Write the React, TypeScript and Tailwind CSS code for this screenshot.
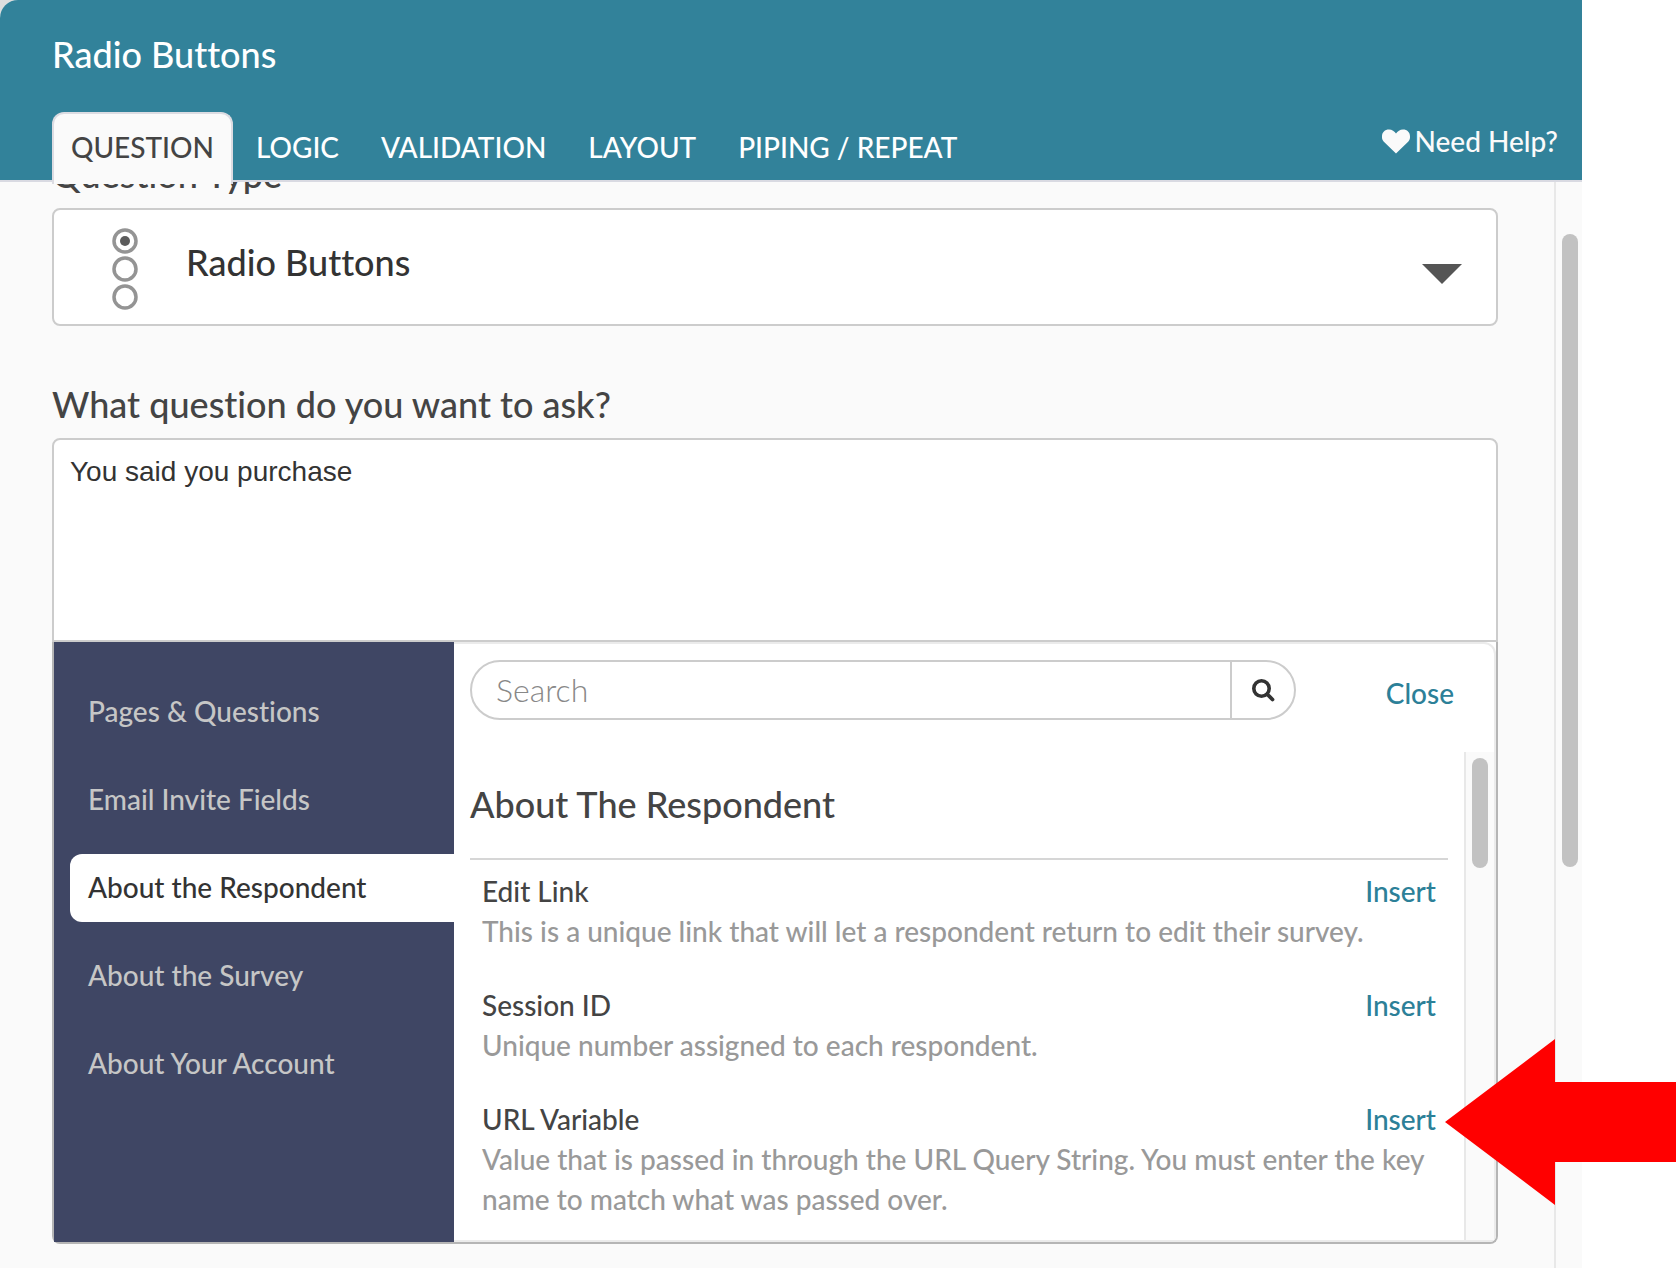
import { useState } from 'react'

interface MergeField {
  name: string
  description: string
}

const tabs = ['QUESTION', 'LOGIC', 'VALIDATION', 'LAYOUT', 'PIPING / REPEAT']

const categories = [
  'Pages & Questions',
  'Email Invite Fields',
  'About the Respondent',
  'About the Survey',
  'About Your Account',
]

const fields: MergeField[] = [
  {
    name: 'Edit Link',
    description: 'This is a unique link that will let a respondent return to edit their survey.',
  },
  {
    name: 'Session ID',
    description: 'Unique number assigned to each respondent.',
  },
  {
    name: 'URL Variable',
    description:
      'Value that is passed in through the URL Query String. You must enter the key name to match what was passed over.',
  },
]

function HeartIcon() {
  return (
    <svg width="30" height="26" viewBox="0 0 30 26" fill="#fafafa" aria-hidden="true">
      <path d="M15 25.5 2.600 13.400C.9 11.700 1 9.800 1 8.500 1 4.200 3.900 1.500 8 1.500c3 0 5.500 2 7 4 1.500-2 4-4 7-4 4.100 0 7 2.700 7 7 0 1.300.1 3.200-1.600 4.900Z" />
    </svg>
  )
}

function RadioListIcon() {
  return (
    <svg width="28" height="84" viewBox="0 0 28 84" fill="none" stroke="#949494" strokeWidth="3.5" aria-hidden="true">
      <circle cx="14" cy="14" r="11" />
      <circle cx="14" cy="42" r="11" />
      <circle cx="14" cy="70" r="11" />
      <circle cx="14" cy="14" r="5" fill="#5c5c5c" stroke="none" />
    </svg>
  )
}

function SearchIcon() {
  return (
    <svg width="24" height="24" viewBox="0 0 24 24" fill="none" stroke="#333" aria-hidden="true">
      <circle cx="10.500" cy="10.500" r="7.700" strokeWidth="3.600" />
      <path d="m16.500 16.500 5 5" strokeWidth="3.800" strokeLinecap="round" />
    </svg>
  )
}

function Header() {
  const [activeTab, setActiveTab] = useState('QUESTION')

  return (
    <header className="relative z-10 rounded-tl-[18px] border-b-2 border-[#d9dae2] bg-[#32829a] pt-8 pr-6 pl-[52px] text-white">
      <h1 className="text-[36px] leading-[44px]">Radio Buttons</h1>

      <div className="mt-9 flex items-start justify-between">
        <nav className="-mb-1 flex gap-1">
          {tabs.map((tab) => (
            <button
              key={tab}
              type="button"
              onClick={() => setActiveTab(tab)}
              className={
                tab === activeTab
                  ? 'rounded-t-xl border-2 border-b-0 border-[#dcdce2] bg-[#fafafa] px-[17px] pt-[13px] pb-[17px] text-[28px] leading-10 text-[#444]'
                  : 'border-2 border-b-0 border-transparent px-[17px] pt-[13px] pb-[17px] text-[28px] leading-10'
              }
            >
              {tab}
            </button>
          ))}
        </nav>

        <a href="#help" className="mt-[9px] flex items-center gap-1 text-[28px] leading-10 text-[#fafafa]">
          <HeartIcon />
          Need Help?
        </a>
      </div>
    </header>
  )
}

function MergeCodePanel() {
  const [category, setCategory] = useState('About the Respondent')

  return (
    <div className="flex rounded-b-lg border-2 border-t-0 border-[#b5b5b5] bg-white">
      <nav className="flex w-[400px] shrink-0 flex-col gap-5 bg-[#3f4664] pt-9 pl-4">
        {categories.map((item) => (
          <button
            key={item}
            type="button"
            onClick={() => setCategory(item)}
            className={
              item === category
                ? 'rounded-l-xl bg-white px-[18px] pt-[13px] pb-[15px] text-left text-[28px] leading-10 text-[#333]'
                : 'px-[18px] pt-[13px] pb-[15px] text-left text-[28px] leading-10 text-[#c6c6c6]'
            }
          >
            {item}
          </button>
        ))}
      </nav>

      <div className="min-w-0 flex-1 rounded-tr-xl rounded-br-md border-2 border-l-0 border-[#ebebeb]">
        {/* Search */}
        <div className="flex items-start justify-between pt-4 pr-10 pl-4">
          <form
            className="mr-[90px] flex h-[60px] flex-1 overflow-hidden rounded-full border-2 border-[#ccc]"
            onSubmit={(e) => e.preventDefault()}
          >
            <input
              type="text"
              aria-label="Search"
              placeholder="Search"
              className="min-w-0 flex-1 px-6 text-[32px] font-light text-[#333] outline-none placeholder:text-[#888]"
            />
            <button
              type="submit"
              aria-label="Run search"
              className="flex w-16 items-center justify-center border-l-2 border-[#ccc]"
            >
              <SearchIcon />
            </button>
          </form>
          <button type="button" className="mt-[13px] text-[28px] leading-10 text-[#2c8098]">
            Close
          </button>
        </div>

        <div className="mt-8 flex">
          <div className="min-w-0 flex-1 pr-4 pl-4">
            <h2 className="border-b-2 border-[#d6d6d6] pt-[30px] pb-8 text-[36px] leading-[44px] text-[#444]">
              About The Respondent
            </h2>
            <ul className="flex flex-col gap-[34px] px-3 pt-[11px] pb-[21px] text-[28px] leading-10">
              {fields.map((field) => (
                <li key={field.name}>
                  <div className="flex justify-between">
                    <h3 className="text-[#444]">{field.name}</h3>
                    <button type="button" className="text-[#2c8098]">
                      Insert
                    </button>
                  </div>
                  <p className="text-[#999]">{field.description}</p>
                </li>
              ))}
            </ul>
          </div>

          {/* Scrollbar */}
          <div className="w-[30px] border-l-2 border-[#e8e8e8] bg-[#fafafa] pt-1.5 pl-1.5">
            <div className="h-[110px] w-4 rounded-full bg-[#c2c2c2]" />
          </div>
        </div>
      </div>
    </div>
  )
}

export default function App() {
  return (
    <div className="relative min-h-screen overflow-hidden bg-white pr-[94px] font-['Lato',sans-serif] font-medium [font-variant-ligatures:none]">
      <div className="absolute top-0 left-0 size-5 bg-[#dedede]" />
      <div className="relative flex min-h-screen flex-col rounded-tl-[18px] bg-[#fafafa]">
        <Header />

        <div className="flex flex-1 overflow-hidden">
          <main className="min-w-0 flex-1 pr-14 pb-6 pl-[52px]">
            {/* Question type */}
            <label htmlFor="question-type" className="-mt-[30px] block text-[36px] leading-[44px] text-[#444]">
              Question Type
            </label>
            <div className="relative mt-3">
              <select
                id="question-type"
                className="h-[118px] w-full appearance-none rounded-lg border-2 border-[#ccc] bg-white pb-2.5 pl-[132px] text-[36px] text-[#333]"
              >
                <option>Radio Buttons</option>
              </select>
              <div className="pointer-events-none absolute top-[19px] left-[59px]">
                <RadioListIcon />
              </div>
              <svg
                className="pointer-events-none absolute top-14 right-9"
                width="40"
                height="20"
                viewBox="0 0 40 20"
                aria-hidden="true"
              >
                <path d="M0 0h40L20 20Z" fill="#555" />
              </svg>
            </div>

            {/* Question text */}
            <label htmlFor="question-text" className="mt-14 block text-[36px] leading-[44px] text-[#444]">
              What question do you want to ask?
            </label>
            <textarea
              id="question-text"
              defaultValue="You said you purchase"
              className="mt-3 block h-[204px] w-full resize-none rounded-t-lg border-2 border-[#ccc] bg-white px-4 py-3 font-['Liberation_Sans',sans-serif] text-[28px] leading-10 text-[#333] outline-none"
            />

            <MergeCodePanel />
          </main>

          {/* Scrollbar */}
          <div className="w-7 border-l-2 border-[#e8e8e8] bg-[#fafafa] pt-[52px] pl-1.5">
            <div className="h-[633px] w-4 rounded-full bg-[#c2c2c2]" />
          </div>
        </div>
      </div>

      {/* Arrow pointing at the URL Variable insert link */}
      <svg
        className="pointer-events-none absolute top-[1039px] right-0 z-20"
        width="231"
        height="166"
        viewBox="0 0 231 166"
        aria-hidden="true"
      >
        <path d="M0 83 110 0v43h121v80H110v43Z" fill="#f00" />
      </svg>
    </div>
  )
}
